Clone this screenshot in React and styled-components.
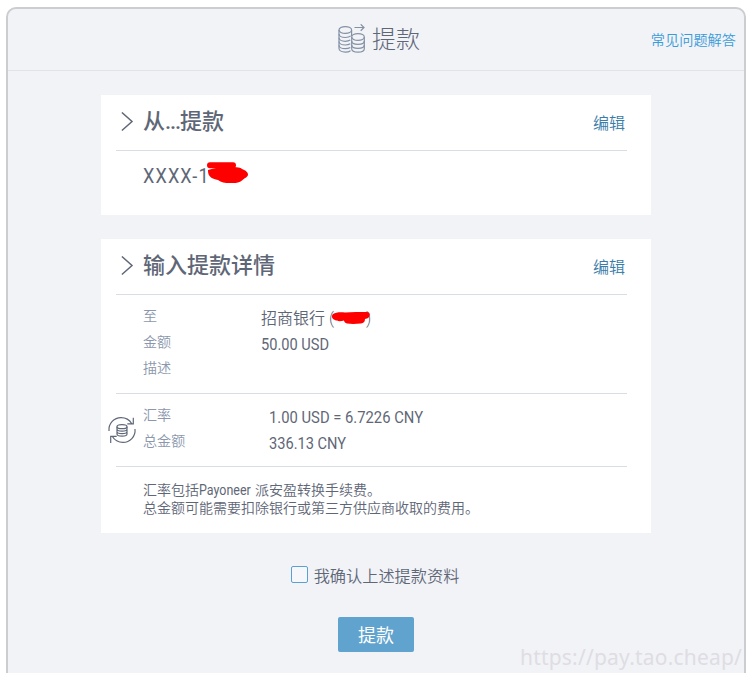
import React, { useState } from 'react';
import styled, { createGlobalStyle } from 'styled-components';

const GlobalStyle = createGlobalStyle`
  * {
    box-sizing: border-box;
  }

  body {
    margin: 0;
    background: #fff;
    color: #5f6777;
    font-family: Roboto, "Noto Sans CJK SC", sans-serif;
    overflow: hidden;
  }
`;

const Page = styled.div`
  height: 673px;
  padding: 7px 5px 0 6px;
  overflow: hidden;
`;

const Panel = styled.main`
  height: 690px;
  background: #f1f3f7;
  border: 2px solid #cbcdd1;
  border-radius: 10px;
`;

const Header = styled.header`
  display: grid;
  grid-template-columns: 1fr auto 1fr;
  align-items: center;
  height: 62px;
  padding: 0 8px;
  border-bottom: 1px solid #e2e3e7;
`;

const Title = styled.h1`
  grid-column: 2;
  display: flex;
  align-items: center;
  gap: 6px;
  padding-left: 6px;
  margin: 0;
  font-size: 24px;
  line-height: 36px;
  font-weight: 300;
`;

const HelpLink = styled.a`
  justify-self: end;
  padding-bottom: 2px;
  color: #3a9bd9;
  font-size: 14.2px;
  font-weight: 350;
`;

const Content = styled.div`
  display: flex;
  flex-direction: column;
  align-items: center;
  padding-top: 24px;
`;

const Card = styled.section`
  width: 550px;
  height: ${({ $height }) => $height}px;
  margin-bottom: 24px;
  padding: 0 24px 0 15px;
  background: #fff;
`;

const CardHeader = styled.div`
  display: flex;
  align-items: center;
  height: 56px;
  padding: 0 2px 2px 5px;
  border-bottom: 1px solid #d9dee6;
`;

const CardTitle = styled.h2`
  flex: 1;
  margin: 0 0 0 9px;
  font-size: 22px;
  line-height: 30px;
  font-weight: 500;
`;

const Dots = styled.span`
  letter-spacing: -1.1px;
`;

const EditLink = styled.a`
  padding-top: 4px;
  color: #3a7ca8;
  font-size: 16px;
  font-weight: 350;
  line-height: 24px;
`;

const Narrow = styled.span`
  display: inline-block;
  transform: scaleX(${({ $scale }) => $scale || 0.86});
  transform-origin: left center;
  letter-spacing: ${({ $spacing }) => $spacing || 0}px;
  white-space: pre;
`;

const Account = styled.div`
  position: relative;
  padding: 10px 0 0 27px;
  font-size: 21px;
  line-height: 30px;
`;

const AccountMark = styled.svg`
  position: absolute;
  left: 90px;
  top: 9px;
`;

const Group = styled.div`
  position: relative;
  padding: 10px 0 10px 27px;
  border-bottom: 1px solid #d9dee6;
`;

const Row = styled.div`
  display: grid;
  grid-template-columns: ${({ $label }) => $label || 118}px 1fr;
  height: 26px;
  line-height: 26px;
`;

const Label = styled.span`
  height: 22px;
  color: #8b97ad;
  font-size: 14.1px;
  font-weight: 350;
  line-height: 22px;
`;

const Value = styled.span`
  font-size: 17px;
`;

const BankValue = styled.span`
  position: relative;
  padding-top: 1px;
  font-size: 16px;
  font-weight: 350;
  white-space: pre;
`;

const Bracket = styled.span`
  margin-left: 32px;
`;

const BankMark = styled.svg`
  position: absolute;
  left: 69px;
  top: 3px;
`;

const RateIcon = styled.svg`
  position: absolute;
  left: -9px;
  top: 21px;
`;

const Note = styled.p`
  margin: 0;
  padding: 14px 0 0 27px;
  font-size: 14px;
  font-weight: 350;
  line-height: 18px;
  white-space: nowrap;
`;

const NoteBrand = styled.span`
  display: inline-block;
  width: 56px;
  font-weight: 400;
`;

const Confirm = styled.label`
  display: flex;
  align-items: center;
  gap: 6px;
  height: 24px;
  margin: 6px 2px 0 0;
  padding-bottom: 1px;
  font-size: 16.2px;
  font-weight: 350;
`;

const Checkbox = styled.input`
  appearance: none;
  width: 17px;
  height: 17px;
  margin: 0;
  border: 1px solid #5ba0cf;
  border-radius: 2px;
  background: #f6f7fa;

  &:checked {
    background: #5ba0cf;
  }
`;

const SubmitButton = styled.button`
  width: 76px;
  height: 35px;
  margin-top: 30px;
  padding: 0 0 2px;
  border: none;
  border-radius: 2px;
  background: #5fa3ce;
  color: #fff;
  font-family: inherit;
  font-size: 18px;
  cursor: pointer;
`;

const Watermark = styled.div`
  position: absolute;
  left: 520px;
  top: 643px;
  color: #dfdde3;
  font-family: "Noto Sans", sans-serif;
  font-size: 21px;
  line-height: 29px;
  letter-spacing: 0.2px;
  white-space: nowrap;
`;

function CoinsIcon() {
  return (
    <svg width="28" height="31" viewBox="0 0 28 31" fill="none" stroke="#8491a5" strokeWidth="1.2">
      <ellipse cx="7.3" cy="6" rx="6.3" ry="3.4" />
      <path d="M1 6v18.500c0 2 2.8 3.6 6.3 3.6 2.2 0 4-.5 5.2-1.4M13.600 6v6" />
      <path d="M1 10c0 2 2.8 3.5 6.3 3.5 2.3 0 4.3-.6 5.4-1.6M1 13.800c0 2 2.8 3.5 6.3 3.5 2 0 3.8-.5 5-1.2M1 17.500c0 2 2.8 3.5 6.3 3.5 2 0 3.8-.5 5-1.2M1 21.200c0 2 2.8 3.5 6.3 3.5 2 0 3.8-.5 5-1.2" />
      <ellipse cx="20" cy="13" rx="6.3" ry="3.4" />
      <path d="M13.700 13v11.700c0 2 2.8 3.4 6.3 3.4s6.3-1.4 6.3-3.4V13" />
      <path d="M13.700 17c0 2 2.8 3.4 6.3 3.4s6.3-1.4 6.3-3.4M13.700 21c0 2 2.8 3.4 6.3 3.4s6.3-1.4 6.3-3.4" />
      <path d="M16.500 3.500H26M22.700.3 26 3.500l-3.300 3.200" />
    </svg>
  );
}

function ChevronIcon() {
  return (
    <svg width="13" height="20" viewBox="0 0 13 20" fill="none" stroke="#5f6777" strokeWidth="1.5">
      <path d="M.9 .5 11 9.500 .9 18.500" />
    </svg>
  );
}

function ExchangeIcon() {
  return (
    <RateIcon width="30" height="30" viewBox="0 0 30 30" fill="none" stroke="#5f6777" strokeWidth="1.2">
      <path d="M2 16C1.3 8.3 7.2 2.6 14 2.6c4.8 0 8.6 2.4 10.8 6.1M26.3 2.8v6.1h-6" />
      <path d="M28 14c.8 7.7-5.2 13.4-12 13.4-4.8 0-8.6-2.4-10.8-6.1M3.7 28v-6.6h6" />
      <ellipse cx="15" cy="11.7" rx="5" ry="2" />
      <path d="M10 11.7V19c0 1.2 2.2 2.1 5 2.1s5-.9 5-2.1v-7.3M10 14.1c0 1.2 2.2 2.1 5 2.1s5-.9 5-2.1M10 16.6c0 1.2 2.2 2.1 5 2.1s5-.9 5-2.1" />
    </RateIcon>
  );
}

function CardTop({ children }) {
  return (
    <CardHeader>
      <ChevronIcon />
      <CardTitle>{children}</CardTitle>
      <EditLink>编辑</EditLink>
    </CardHeader>
  );
}

export default function App() {
  const [confirmed, setConfirmed] = useState(false);

  return (
    <Page>
      <GlobalStyle />
      <Panel>
        <Header>
          <Title>
            <CoinsIcon />
            提款
          </Title>
          <HelpLink>常见问题解答</HelpLink>
        </Header>

        <Content>
          <Card $height={120}>
            <CardTop>从<Dots>...</Dots>提款</CardTop>
            <Account>
              <Narrow $spacing={1.3}>XXXX-1</Narrow>
              <AccountMark width="44" height="28" viewBox="0 0 44 28">
                <path
                  d="M4 5.300h23"
                  stroke="#f00"
                  strokeWidth="6"
                  strokeLinecap="round"
                />
                <path
                  d="M2 10C8 8 14 7 22 7c6 0 12 0 14 2 3 1 6 3 6 5.500 0 3-4 3.500-6 6-3 3-8 2.500-12 2.500-5 0-9-.3-12-3-3-1-6-1-8-3.500-2-2-2-4.500-2-6.500z"
                  fill="#f00"
                />
              </AccountMark>
            </Account>
          </Card>

          <Card $height={294}>
            <CardTop>输入提款详情</CardTop>
            <Group>
              <Row>
                <Label>至</Label>
                <BankValue>
                  招商银行 (
                  <BankMark width="44" height="20" viewBox="0 0 44 20">
                    <path
                      d="M3 6c3-2 8-2 12-1.500C22 3.500 30 4 37 4c3 0 3.500 3 2 5-1 1.500-3 1.500-4 2 0 3-1.500 4-4 4.500-6 .5-10 .5-14 0-2-.5-3-2-3-3-3 1-7 1-9-.5-3-1-4-4-2-6z"
                      fill="#f00"
                    />
                  </BankMark>
                  <Bracket>)</Bracket>
                </BankValue>
              </Row>
              <Row>
                <Label>金额</Label>
                <Value><Narrow>50.00 USD</Narrow></Value>
              </Row>
              <Row>
                <Label>描述</Label>
              </Row>
            </Group>
            <Group>
              <ExchangeIcon />
              <Row $label={126}>
                <Label>汇率</Label>
                <Value><Narrow $scale={0.87}>1.00 USD = 6.7226 CNY</Narrow></Value>
              </Row>
              <Row $label={126}>
                <Label>总金额</Label>
                <Value><Narrow>336.13 CNY</Narrow></Value>
              </Row>
            </Group>
            <Note>
              汇率包括<NoteBrand><Narrow $scale={0.89}>Payoneer</Narrow></NoteBrand>派安盈转换手续费。
              <br />
              总金额可能需要扣除银行或第三方供应商收取的费用。
            </Note>
          </Card>

          <Confirm>
            <Checkbox type="checkbox" checked={confirmed} onChange={() => setConfirmed(!confirmed)} />
            我确认上述提款资料
          </Confirm>
          <SubmitButton>提款</SubmitButton>
        </Content>
      </Panel>
      <Watermark>https://pay.tao.cheap/</Watermark>
    </Page>
  );
}
